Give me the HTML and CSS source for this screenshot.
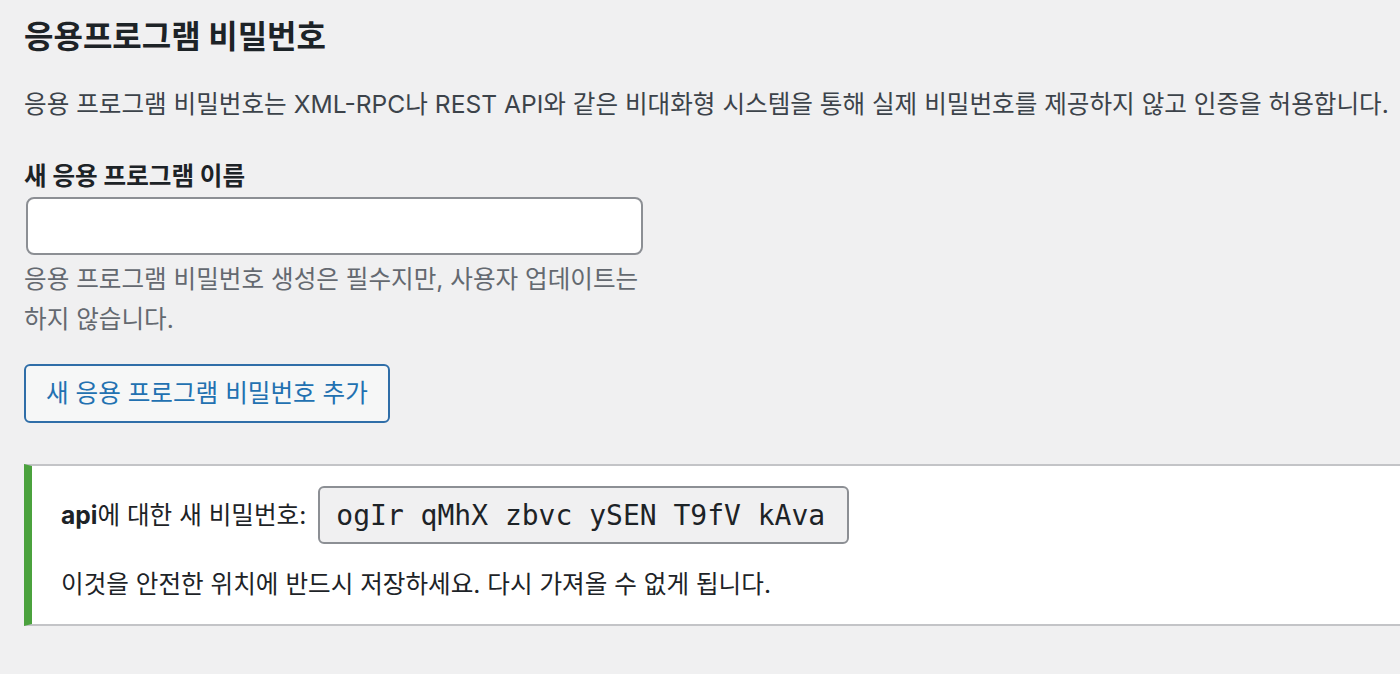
FILE: index.html
```html
<!DOCTYPE html>
<html lang="ko">
<head>
<meta charset="utf-8">
<title>응용프로그램 비밀번호</title>
<link rel="stylesheet" href="styles.css">
</head>
<body>
<div class="wrap">
  <h2 class="title">응용프로그램 비밀번호</h2>
  <p class="intro">응용 프로그램 비밀번호는 XML-RPC나 REST API와 같은 비대화형 시스템을 통해 실제 비밀번호를 제공하지 않고 인증을 허용합니다.</p>
  <div class="field">
    <label class="field-label" for="app-name">새 응용 프로그램 이름</label>
    <input class="text-input" id="app-name" type="text">
    <p class="description">응용 프로그램 비밀번호 생성은 필수지만, 사용자 업데이트는 하지 않습니다.</p>
  </div>
  <button class="button" type="button">새 응용 프로그램 비밀번호 추가</button>
  <div class="notice">
    <div class="notice-row">
      <span class="notice-label"><strong>api</strong>에 대한 새 비밀번호:</span>
      <code class="password">ogIr qMhX zbvc ySEN T9fV kAva</code>
    </div>
    <p class="notice-text">이것을 안전한 위치에 반드시 저장하세요. 다시 가져올 수 없게 됩니다.</p>
  </div>
</div>
</body>
</html>
```

FILE: styles.css
```css
* { box-sizing: border-box; }
html, body { margin: 0; padding: 0; }
body {
  background: #f0f0f1;
  color: #3c434a;
  font-family: Inter, "Noto Sans CJK KR", sans-serif;
  font-size: 24.6px;
  word-break: keep-all;
  overflow: hidden;
}
.wrap {
  padding: 17px 0 0 24px;
}
.title {
  margin: 0;
  font-size: 32px;
  line-height: 40px;
  font-weight: 700;
  color: #1d2327;
}
.intro {
  margin: 32px 0 0;
  line-height: 30px;
  white-space: nowrap;
}
.field {
  margin-top: 42px;
}
.field-label {
  display: block;
  font-weight: 700;
  line-height: 30px;
  color: #1d2327;
}
.text-input {
  display: block;
  margin: 6px 0 0 2px;
  width: 617px;
  height: 58px;
  border: 2px solid #8c8f94;
  border-radius: 8px;
  background: #fff;
  font: inherit;
}
.description {
  margin: 4px 0 0;
  width: 622px;
  line-height: 40px;
  color: #646970;
}
.button {
  display: block;
  margin-top: 25px;
  height: 59px;
  padding: 0 20px;
  border: 2px solid #2f6ea8;
  border-radius: 6px;
  background: #f6f7f7;
  color: #2271b1;
  font: inherit;
  line-height: 1;
  cursor: pointer;
}
.notice {
  margin-top: 41px;
  background: #fff;
  border-left: 8px solid #4ba23e;
  border-top: 2px solid #c3c4c7;
  border-bottom: 2px solid #c3c4c7;
  padding: 20px 0 25px 29px;
}
.notice-row {
  display: flex;
  align-items: center;
  gap: 12px;
}
.notice-label {
  line-height: 30px;
  color: #1d2327;
}
.password {
  display: flex;
  align-items: center;
  height: 58px;
  padding: 0 22px 0 16px;
  border: 2px solid #8c8f94;
  border-radius: 6px;
  background: #f0f0f1;
  color: #1d2327;
  font-family: "DejaVu Sans Mono", monospace;
  font-size: 28px;
}
.notice-text {
  margin: 25px 0 0;
  line-height: 30px;
  color: #1d2327;
}
```
